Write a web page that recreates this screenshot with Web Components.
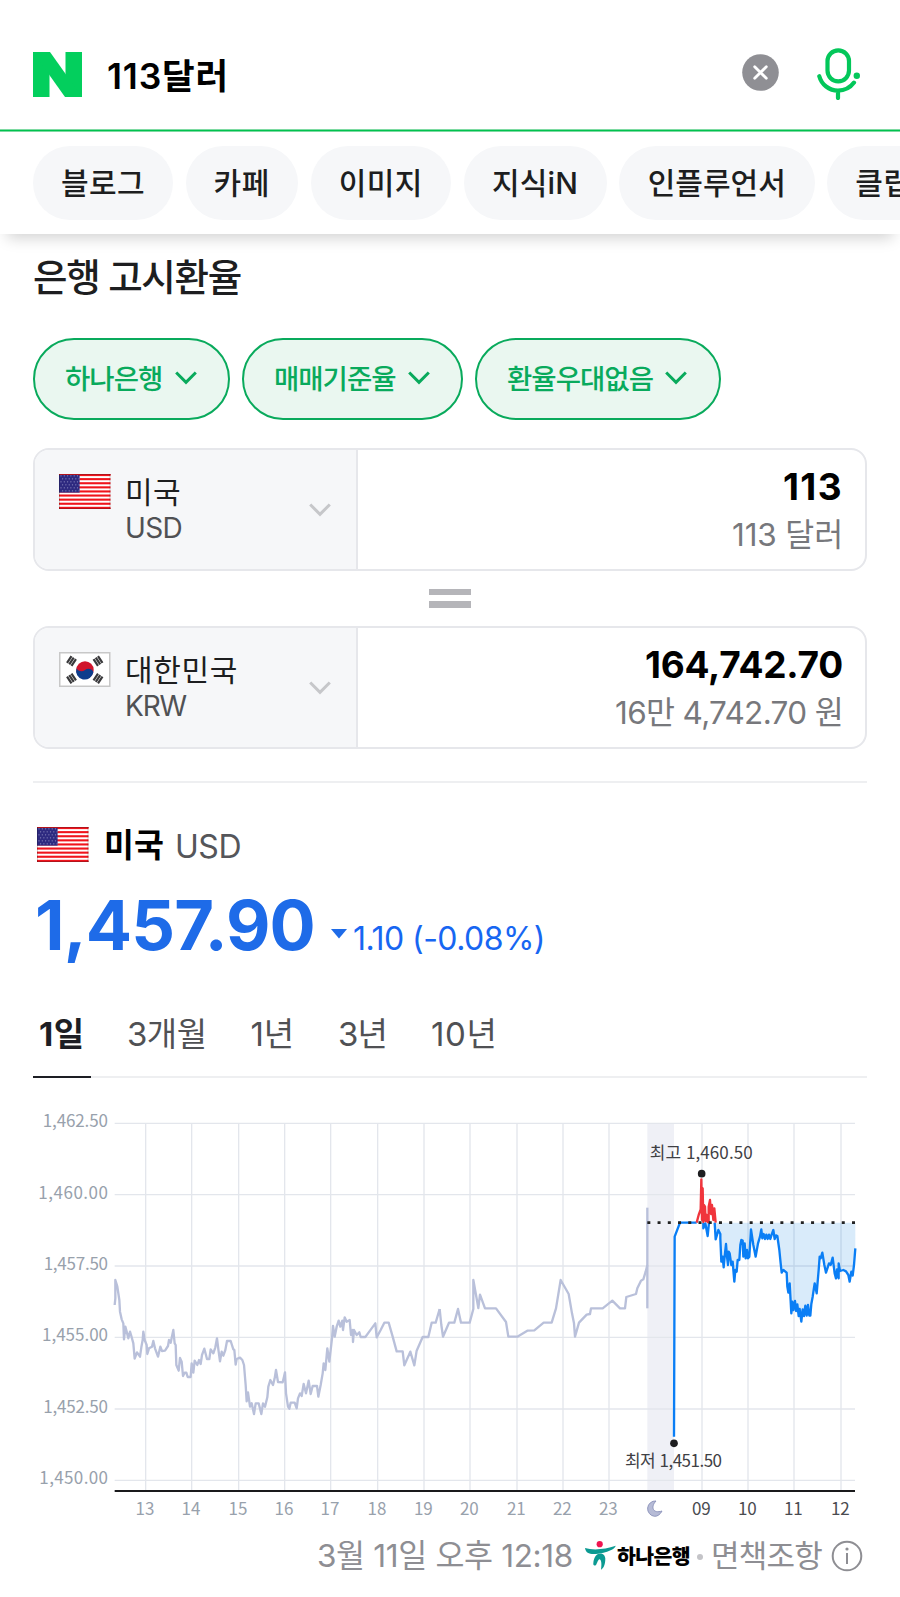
<!DOCTYPE html>
<html lang="ko">
<head>
<meta charset="utf-8">
<title>113달러</title>
<style>
  body {
    margin: 0;
    background: #fff;
    color: #1d1e20;
    font-family: Inter, "Noto Sans CJK KR", sans-serif;
    overflow-x: hidden;
  }
  main {
    display: flex;
    flex-direction: column;
    padding: 0 33px;
  }
</style>
</head>
<body>
<search-header></search-header>
<main>
  <rate-converter></rate-converter>
  <rate-summary></rate-summary>
  <period-tabs></period-tabs>
  <rate-chart></rate-chart>
  <rate-footer></rate-footer>
</main>

<script>
// Text run spread or tightened to a given width
class FitText extends HTMLElement {
  constructor() {
    super();
    this.attachShadow({ mode: "open" });
    this.shadowRoot.innerHTML = "<style>:host { display: inline-block; flex: none; white-space: nowrap; }</style><slot></slot>";
  }

  connectedCallback() {
    const w = Number(this.getAttribute("w"));
    const natural = this.getBoundingClientRect().width;
    const count = [...this.textContent].length;
    this.style.letterSpacing = `${((w - natural) / count).toFixed(3)}px`;
  }
}

class FlagIcon extends HTMLElement {
  constructor() {
    super();
    this.attachShadow({ mode: "open" });
  }

  connectedCallback() {
    const code = this.getAttribute("code");
    this.shadowRoot.innerHTML = `
      <style>
        :host { display: block; flex: none; width: 52px; height: 35px; }
        svg { display: block; }
      </style>
      ${code === "us" ? this.us() : this.kr()}
    `;
  }

  us() {
    let stripes = "";
    for (let i = 0; i < 9; i++) {
      stripes += `<rect y="${i * 4.1}" width="51.5" height="2.1" fill="#f0141c"/>`;
    }
    let stars = "";
    for (let r = 0; r < 6; r++) {
      for (let c = 0; c < 6; c++) {
        stars += `<circle cx="${2 + c * 3.3 + (r % 2) * 1.6}" cy="${1.8 + r * 3}" r=".65"/>`;
      }
    }
    return `
      <svg width="52" height="35" viewBox="0 0 52 35">
        <rect width="51.5" height="35" fill="#fff"/>
        ${stripes}
        <rect width="20.6" height="18.6" fill="#2e2a80"/>
        <g fill="#8d8abf">${stars}</g>
        <path d="M0 .5h51.5M0 34.5h51.5" stroke="#b3141c" stroke-width="1"/>
        <path d="M.5 0v35M51 0v35" stroke="#000" stroke-opacity=".18"/>
      </svg>`;
  }

  kr() {
    const bars = (x, y, a) => `
      <g transform="translate(${x} ${y}) rotate(${a})" stroke="#3a3a3c" stroke-width="2.2">
        <path d="M-4-2.7h8M-4 0h8M-4 2.7h8"/>
      </g>`;
    return `
      <svg width="52" height="35" viewBox="0 0 52 35">
        <rect x=".75" y=".75" width="50" height="33.5" fill="#fff" stroke="#c8c8c8" stroke-width="1.5"/>
        <circle cx="26" cy="18" r="8.7" fill="#d0142c"/>
        <path d="M17.5 16.2c1.5 3 5.6 4 8.5 1.8 3-2.3 7-1 8.4 2A8.7 8.7 0 1 1 17.5 16.2z" fill="#0d3c8c"/>
        ${bars(12.5, 9, -56)}${bars(39, 9, 56)}
        ${bars(12.5, 26.5, 56)}${bars(39, 26.5, -56)}
      </svg>`;
  }
}

class ChevronDown extends HTMLElement {
  constructor() {
    super();
    this.attachShadow({ mode: "open" });
    this.shadowRoot.innerHTML = `
      <style>
        :host { display: block; flex: none; width: 22px; height: 14px; }
        svg { display: block; }
      </style>
      <svg width="22" height="14" viewBox="0 0 22 14" fill="none">
        <path d="M1.2 1.5 11 11.3 20.8 1.5" stroke="currentColor" stroke-width="3"/>
      </svg>
    `;
  }
}

class SearchHeader extends HTMLElement {
  constructor() {
    super();
    this.attachShadow({ mode: "open" });
  }

  connectedCallback() {
    const tabs = [
      ["블로그", 140, 84],
      ["카페", 112.5, 56.5],
      ["이미지", 140.5, 84],
      ["지식iN", 143, 86],
      ["인플루언서", 195.5, 138],
      ["클립", 112.5, 56],
    ];
    this.shadowRoot.innerHTML = `
      <style>
        :host {
          display: block;
          height: 234px;
          background: #fff;
          box-shadow: 0 11px 14px -7px rgba(0, 0, 0, .18);
        }
        .bar {
          box-sizing: border-box;
          height: 129px;
          padding: 20px 39px 0 33px;
          display: flex;
          align-items: center;
        }
        svg { display: block; flex: none; }
        .query {
          flex: 1;
          margin: 4px 0 0 25px;
          color: #000;
          font-size: 35.5px;
          font-weight: 600;
          line-height: 44px;
        }
        .clear { margin: -4px 38px 0 0; }
        .mic { margin-top: -2px; }
        .rule {
          height: 3px;
          background: linear-gradient(#7edaa2 1px, #00c24e 1px 2px, #7edaa2 2px);
        }
        .tabs {
          display: flex;
          gap: 12.5px;
          padding: 14px 0 14px 33px;
          overflow: hidden;
        }
        .tab {
          flex: none;
          height: 74px;
          border-radius: 37px;
          background: #f6f7f9;
          display: flex;
          align-items: center;
          justify-content: center;
          font-size: 30px;
          font-weight: 500;
          line-height: 40px;
        }
      </style>
      <div class="bar">
        <svg width="49" height="45" viewBox="0 0 49 45" fill="#03cf5d">
          <rect width="16.5" height="45"/>
          <rect x="32.5" width="16.5" height="45"/>
          <path d="M0 0h17l32 45H32z"/>
        </svg>
        <div class="query"><fit-text w="122">113달러</fit-text></div>
        <svg class="clear" width="37" height="37" viewBox="0 0 37 37">
          <circle cx="18.5" cy="18.5" r="18.3" fill="#8f8f94"/>
          <path d="M12.7 12.7l11.6 11.6M24.3 12.7L12.7 24.3" stroke="#fff" stroke-width="2.8" stroke-linecap="round"/>
        </svg>
        <svg class="mic" width="44" height="52" viewBox="0 0 44 52" fill="none" stroke="#03c75a" stroke-width="4.2" stroke-linecap="round">
          <rect x="10.5" y="2.3" width="21.5" height="31" rx="10.75"/>
          <path d="M2.3 28.2C4.5 36.5 12 42.6 21 42.6c6.500 0 12.300-3 16-8M21 43v7"/>
          <circle cx="39.8" cy="27.8" r="3.2" fill="#03c75a" stroke="none"/>
        </svg>
      </div>
      <div class="rule"></div>
      <nav class="tabs">
        ${tabs.map(([name, width, w]) => `<div class="tab" style="width:${width}px"><fit-text w="${w}">${name}</fit-text></div>`).join("")}
      </nav>
    `;
  }
}

class FilterPill extends HTMLElement {
  constructor() {
    super();
    this.attachShadow({ mode: "open" });
    this.shadowRoot.innerHTML = `
      <style>
        :host {
          display: flex;
          align-items: center;
          box-sizing: border-box;
          height: 82px;
          padding: 0 31.5px 0 30px;
          gap: 12px;
          border: 2px solid #09aa5c;
          border-radius: 41px;
          background: #eaf7f0;
          color: #09aa5c;
          font-size: 27.5px;
          font-weight: 500;
          line-height: 40px;
        }
        chevron-down { margin-bottom: 2px; }
      </style>
      <slot></slot><chevron-down></chevron-down>
    `;
  }
}

class CurrencyBox extends HTMLElement {
  constructor() {
    super();
    this.attachShadow({ mode: "open" });
  }

  connectedCallback() {
    this.shadowRoot.innerHTML = `
      <style>
        :host {
          display: flex;
          box-sizing: border-box;
          height: 122.5px;
          border: 2px solid #e6e7eb;
          border-radius: 16px;
          overflow: hidden;
        }
        .country {
          box-sizing: border-box;
          width: 323px;
          padding: 0 25px 0 24px;
          border-right: 2px solid #e6e7eb;
          background: #f6f7f9;
          display: flex;
        }
        flag-icon { margin-top: 24px; }
        .names {
          flex: 1;
          margin: 24px 0 0 14px;
          display: flex;
          flex-direction: column;
          line-height: 36px;
          font-size: 30px;
          font-weight: 400;
        }
        .names > span, .amounts > span { display: flex; }
        .code { color: #505154; font-size: 28px; }
        chevron-down { margin-top: 53px; color: #c6c7ca; }
        .amounts {
          flex: 1;
          padding: 14.5px 22px 0 0;
          display: flex;
          flex-direction: column;
          align-items: flex-end;
          line-height: 44px;
        }
        .amount { color: #000; font-size: 37px; font-weight: 700; }
        .spoken { margin-top: 4px; color: #77787c; font-size: 31.5px; font-weight: 400; }
      </style>
      <div class="country">
        <flag-icon code="${this.getAttribute("flag")}"></flag-icon>
        <div class="names">
          <span><slot name="name"></slot></span>
          <span class="code"><slot name="code"></slot></span>
        </div>
        <chevron-down></chevron-down>
      </div>
      <div class="amounts">
        <span class="amount"><slot name="amount"></slot></span>
        <span class="spoken"><slot name="spoken"></slot></span>
      </div>
    `;
  }
}

class RateConverter extends HTMLElement {
  constructor() {
    super();
    this.attachShadow({ mode: "open" });
  }

  connectedCallback() {
    this.shadowRoot.innerHTML = `
      <style>
        :host {
          display: flow-root;
          padding-bottom: 32.5px;
          border-bottom: 2px solid #eeeff1;
        }
        h2 {
          height: 50px;
          margin: 19px 0 35px;
          font-size: 37.5px;
          font-weight: 500;
          line-height: 50px;
        }
        .filters { display: flex; gap: 12px; margin-bottom: 28px; }
        .equals {
          height: 55.5px;
          display: flex;
          flex-direction: column;
          align-items: center;
          justify-content: center;
          gap: 6px;
        }
        .equals i { width: 42px; height: 6.5px; background: #b5b5b9; }
      </style>
      <h2><fit-text w="208">은행 고시환율</fit-text></h2>
      <div class="filters">
        <filter-pill><fit-text w="97.5">하나은행</fit-text></filter-pill>
        <filter-pill><fit-text w="121.5">매매기준율</fit-text></filter-pill>
        <filter-pill><fit-text w="146">환율우대없음</fit-text></filter-pill>
      </div>
      <currency-box flag="us">
        <fit-text slot="name" w="56">미국</fit-text>
        <fit-text slot="code" w="57">USD</fit-text>
        <fit-text slot="amount" w="60">113</fit-text>
        <fit-text slot="spoken" w="111">113 달러</fit-text>
      </currency-box>
      <div class="equals"><i></i><i></i></div>
      <currency-box flag="kr">
        <fit-text slot="name" w="113">대한민국</fit-text>
        <fit-text slot="code" w="61">KRW</fit-text>
        <fit-text slot="amount" w="198">164,742.70</fit-text>
        <fit-text slot="spoken" w="228">16만 4,742.70 원</fit-text>
      </currency-box>
    `;
  }
}

class RateSummary extends HTMLElement {
  constructor() {
    super();
    this.attachShadow({ mode: "open" });
    this.shadowRoot.innerHTML = `
      <style>
        :host { display: block; padding: 41.5px 0 0 4px; }
        .name {
          display: flex;
          align-items: center;
          height: 40px;
          line-height: 40px;
        }
        .name b { margin: 2px 0 0 15px; color: #000; font-size: 32.5px; font-weight: 700; }
        .name span { margin: 4px 0 0 11px; color: #55565a; font-size: 32px; font-weight: 400; }
        .price {
          display: flex;
          align-items: baseline;
          margin-top: 27px;
          height: 68px;
          line-height: 68px;
          color: #1e6be8;
        }
        .price strong { margin-left: -2px; font-size: 68.5px; font-weight: 700; }
        .price svg { align-self: center; margin: 17px 6px 0 16px; }
        .price span { font-size: 32px; font-weight: 400; color: #1766f2; }
      </style>
      <div class="name">
        <flag-icon code="us"></flag-icon>
        <b><fit-text w="60">미국</fit-text></b>
        <span><fit-text w="66">USD</fit-text></span>
      </div>
      <div class="price">
        <strong><fit-text w="280">1,457.90</fit-text></strong>
        <svg width="16" height="10" viewBox="0 0 16 10"><path d="M0 0h16L8 9.5z" fill="#1e6be8"/></svg>
        <span><fit-text w="192">1.10 (-0.08%)</fit-text></span>
      </div>
    `;
  }
}

class PeriodTabs extends HTMLElement {
  constructor() {
    super();
    this.attachShadow({ mode: "open" });
    this.shadowRoot.innerHTML = `
      <style>
        :host {
          display: flex;
          gap: 44px;
          box-sizing: border-box;
          height: 66px;
          margin-top: 52px;
          box-shadow: inset 0 -2px #eeeff1;
          color: #505154;
          font-size: 33px;
          font-weight: 400;
          line-height: 44px;
        }
        .on {
          box-sizing: border-box;
          width: 58px;
          margin-right: -8px;
          padding-left: 6px;
          border-bottom: 2px solid #1d1e24;
          color: #1d1e24;
          font-weight: 700;
        }
      </style>
      <div class="on"><fit-text w="45.5">1일</fit-text></div>
      <fit-text w="79.5">3개월</fit-text>
      <fit-text w="43.5">1년</fit-text>
      <fit-text w="49">3년</fit-text>
      <fit-text w="66.5">10년</fit-text>
    `;
  }
}

class RateChart extends HTMLElement {
  constructor() {
    super();
    this.attachShadow({ mode: "open" });
  }

  connectedCallback() {
    // [label, y, left edge of label]
    const rows = [
      ["1,462.50", 40, 128], ["1,460.00", 254, 115], ["1,457.50", 468, 131],
      ["1,455.00", 682, 126], ["1,452.50", 897, 130], ["1,450.00", 1111, 118],
    ];
    const hours = [
      ["13", 437], ["14", 575], ["15", 716], ["16", 854], ["17", 992], ["18", 1133],
      ["19", 1272], ["20", 1410], ["21", 1551], ["22", 1689], ["23", 1827],
      ["09", 2106], ["10", 2244], ["11", 2382], ["12", 2523],
    ];
    const grid =
      rows.map(([, y]) => `<path d="M344 ${y}H2565"/>`).join("") +
      hours.map(([, x]) => `<path d="M${x} 40V1140"/>`).join("");
    const yLabels = rows.map(([t, y, x]) => `<text x="${x}" y="${y + 12}" textLength="${324 - x}">${t}</text>`).join("");
    const xLabels = hours.map(([t, x], i) => `<text x="${x - 2}" y="1216" text-anchor="middle"${i > 10 ? ' fill="#4a4b50"' : ""}>${t}</text>`).join("");

    // day session, evening session, then today's line in its three runs
    const day = "344,135 346,115 346,60 352,80 358,120 360,155 365,178 370,190 372,238 376,200 380,215 385,235 390,215 394,228 400,250 404,296 411,277 420,290 424,262 428,240 430,215 434,240 440,255 442,282 447,265 456,260 460,243 465,265 474,290 481,260 486,273 495,272 504,258 507,240 512,248 520,210 524,250 527,255 529,315 536,332 540,294 545,305 549,348 554,338 559,338 563,351 572,351 575,310 580,338 584,302 592,315 597,300 602,312 606,285 613,266 621,297 628,297 632,268 640,280 646,262 651,235 656,275 660,304 665,275 670,287 676,270 681,243 692,243 700,268 703,270 707,314 710,297 720,293 727,300 732,315 737,375 740,424 744,397 750,440 755,430 762,462 767,430 776,430 784,462 789,430 795,440 802,412 805,380 811,360 819,375 824,355 828,330 834,366 848,367 852,350 855,337 858,400 864,440 868,446 872,428 884,428 890,445 894,415 900,400 905,408 911,372 918,400 926,362 932,402 938,378 951,378 955,410 962,375 968,340 971,310 976,330 982,265 988,305 996,235 999,198 1004,230 1010,200 1016,182 1021,200 1027,182 1029,210 1034,172 1040,185 1049,180 1053,225 1058,210 1059,246 1062,210 1070,225 1078,217 1082,231 1096,231 1110,212 1126,190 1130,232 1142,210 1153,188 1166,188 1178,230 1190,274 1208,274 1213,316 1231,275 1243,316 1250,272 1268,231 1285,231 1295,188 1307,188 1319,147";
    const evening = "-1,207 4,255 9,290 27,248 43,248 54,207 63,248 89,248 100,207 100,120 115,204 120,164 135,205 168,205 198,246 205,290 232,290 262,272 283,271 311,248 335,248 348,205 362,120 386,162 396,220 402,250 405,290 417,248 440,224 450,222 453,205 488,205 517,182 540,205 555,205 559,171 588,162 592,145 603,122 610,118 617,95 622,75";
    const dips = "220,338 220,355 226,340 233,378 237,338";
    const fall = "254,338 257,388 261,375 265,360 271,372 271,385 274,455 278,440 281,472 285,430 288,402 291,440 294,465 296,425 299,430 304,465 308,455 313,515 316,480 320,485 323,450 328,450 331,405 334,390 338,392 340,440 344,400 347,445 351,420 354,445 358,440 363,358 370,405 377,440 384,400 390,380 394,358 397,385 401,372 405,387 409,374 413,387 417,374 421,387 425,374 430,360 434,387 438,376 442,378 448,420 452,460 455,488 460,480 470,488 472,530 475,548 479,520 484,610 487,575 490,600 495,573 498,603 502,583 506,618 509,597 514,635 518,598 522,618 526,587 530,617 534,585 538,617 541,617 544,582 548,560 551,540 554,520 560,550 566,480 569,440 572,445 577,428 583,465 588,488 597,460 602,465 608,443 614,490 618,505 621,478 626,505 626,460 630,483 640,480 648,484 655,495 659,515 664,485 668,497 672,465 676,415";
    const rise = "200,338 206,315 212,298 214,208 216,330 218,235 220,336 222,285 225,290 227,333 230,315 233,336 236,336 236,290 240,270 243,312 246,285 250,330 253,295 257,338";

    this.shadowRoot.innerHTML = `
      <style>
        :host { display: block; margin-top: 32px; }
        svg { display: block; width: 834px; height: 410px; }
        text { font-family: "Noto Sans CJK KR", sans-serif; font-size: 51px; }
      </style>
      <svg viewBox="99 0 2502 1230" fill="none">
        <rect x="1942" y="40" width="80" height="1100" fill="#eff0f6"/>
        <g stroke="#e3e6ec" stroke-width="4">${grid}</g>
        <g fill="#98a1ac">${yLabels}${xLabels}</g>
        <g stroke="#b9c0da" stroke-width="7" stroke-linejoin="round">
          <polyline points="${day}" transform="translate(0 450)"/>
          <polyline points="${evening}" transform="translate(1320 390)"/>
          <path d="M1942 293V595"/>
        </g>
        <g transform="translate(1890 0)" stroke-width="7" stroke-linejoin="round">
          <path d="M254 338 L${fall} V338z" fill="#007bdc" fill-opacity=".15"/>
          <g stroke="#0a7ef5">
            <polyline points="132,980 134,380 150,338 200,338"/>
            <polyline points="${dips}"/>
            <polyline points="${fall}"/>
          </g>
          <polyline points="${rise}" stroke="#f0353c"/>
          <path d="M52 338H676" stroke="#222" stroke-width="8" stroke-dasharray="9 21.7"/>
          <circle cx="215" cy="191" r="11.5" fill="#1e1e20"/>
          <circle cx="132" cy="1000" r="11.5" fill="#1e1e20"/>
        </g>
        <path d="M344 1143H2565" stroke="#1a1a1c" stroke-width="6"/>
        <g fill="#3f4044">
          <text x="1949" y="147" textLength="309">최고 1,460.50</text>
          <text x="1875" y="1072" textLength="291">최저 1,451.50</text>
        </g>
        <path d="M1968 1173C1950 1192 1960 1212 1986 1203C1981 1213 1973 1219 1964 1219A23 23 0 0 1 1968 1173z" fill="#b6bbd6" stroke="#8f96bd" stroke-width="3"/>
      </svg>
    `;
  }
}

class RateFooter extends HTMLElement {
  constructor() {
    super();
    this.attachShadow({ mode: "open" });
    this.shadowRoot.innerHTML = `
      <style>
        :host {
          display: flex;
          justify-content: flex-end;
          align-items: center;
          height: 36px;
          margin-top: 18px;
          padding-right: 4px;
          line-height: 36px;
          color: #8e8e93;
          font-size: 31.5px;
          font-weight: 400;
        }
        svg { display: block; flex: none; }
        .hana { margin: 0 1px 0 12px; }
        .bank { margin-top: 3px; color: #000; font-size: 20.5px; font-weight: 900; }
        .dot { width: 6px; height: 6px; margin: 2px 8px 0 7px; border-radius: 50%; background: #c4c4c8; }
        .terms { font-size: 31px; margin-right: 9px; }
      </style>
      <fit-text w="256">3월 11일 오후 12:18</fit-text>
      <svg class="hana" width="31" height="30" viewBox="0 0 31 30">
        <circle cx="14.7" cy="3.2" r="3.1" fill="#f01450"/>
        <path d="M0 7C8 9.5 20 8.5 30.8 4.8C29 9 23 10.5 18.5 11.8C8 14 1 14 0 7z" fill="#0b9a92"/>
        <path d="M8.3 22.5C9 9.5 20 10.5 20.3 17.5C20.400 23 18.800 27 16 28.800C16.800 23 16.500 19 14.700 18.200C12.800 17.800 12 24 10.200 24.500C8.800 24.500 8.200 24 8.300 22.500z" fill="#0b9a92"/>
      </svg>
      <span class="bank"><fit-text w="73">하나은행</fit-text></span>
      <i class="dot"></i>
      <span class="terms"><fit-text w="111">면책조항</fit-text></span>
      <svg width="32" height="32" viewBox="0 0 32 32" fill="none" stroke="#8e8e93" stroke-width="2">
        <circle cx="16" cy="16" r="14.3"/>
        <path d="M16 13v11"/>
        <circle cx="16" cy="9" r="1.6" fill="#8e8e93" stroke="none"/>
      </svg>
    `;
  }
}

customElements.define("fit-text", FitText);
customElements.define("flag-icon", FlagIcon);
customElements.define("chevron-down", ChevronDown);
customElements.define("filter-pill", FilterPill);
customElements.define("currency-box", CurrencyBox);
customElements.define("search-header", SearchHeader);
customElements.define("rate-converter", RateConverter);
customElements.define("rate-summary", RateSummary);
customElements.define("period-tabs", PeriodTabs);
customElements.define("rate-chart", RateChart);
customElements.define("rate-footer", RateFooter);
</script>
</body>
</html>
